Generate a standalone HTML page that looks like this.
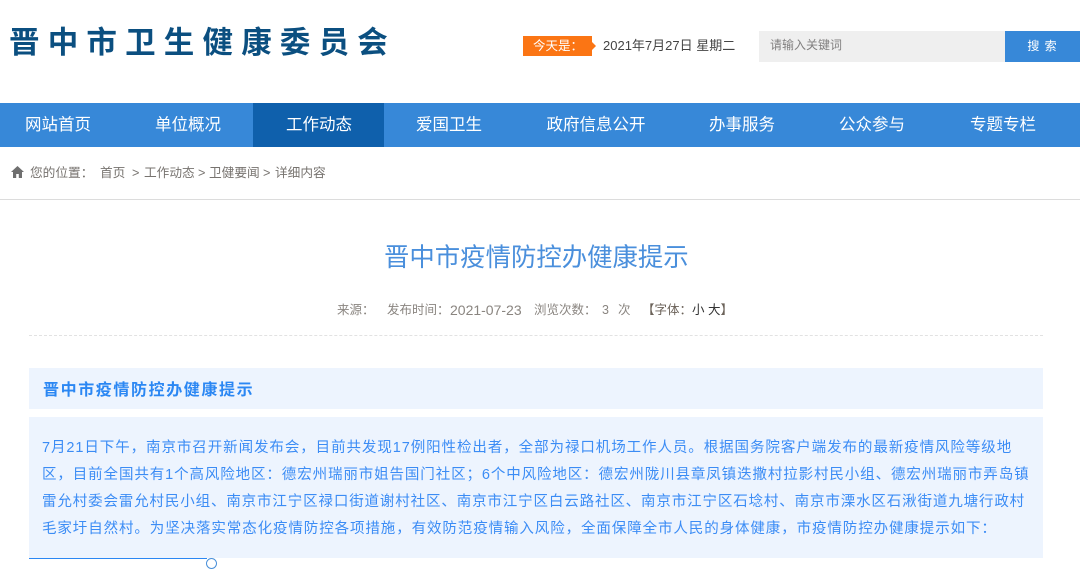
<!DOCTYPE html>
<html lang="zh-CN">
<head>
<meta charset="utf-8">
<title>晋中市疫情防控办健康提示</title>
<style>
html,body{margin:0;padding:0;background:#fff}
body{width:1080px;height:567px;overflow:hidden;position:relative;font-family:"Liberation Sans","Noto Sans CJK SC",sans-serif}
.a{position:absolute;white-space:nowrap}
.nav{left:0;top:103px;width:1080px;height:44px;background:#3788d8}
.n{position:absolute;top:103px;height:44px;line-height:44px;color:#fff;font-size:16.5px;text-align:center;width:140px}
.b{color:#3b8cf5;font-size:14.5px;height:27px;line-height:27px;left:42px}
.m{top:301px;font-size:12.5px;line-height:18px;color:#8a8580}
.c{top:163px;font-size:12.7px;line-height:20px;color:#77736f}
</style>
</head>
<body>
<div class="a" style="left:9px;top:23px;font-size:30.5px;line-height:40px;font-weight:700;color:#0b4f80;letter-spacing:8.2px">晋中市卫生健康委员会</div>

<div class="a" style="left:523px;top:36px;width:69px;height:20px;background:#fb7514;color:#fff;font-size:12.5px;line-height:20px;text-indent:10px">今天是：</div>
<div class="a" style="left:592px;top:42px;width:0;height:0;border-left:4px solid #fb7514;border-top:4px solid transparent;border-bottom:4px solid transparent"></div>
<div class="a" style="left:603px;top:36px;font-size:13px;line-height:20px;color:#444">2021年7月27日 星期二</div>

<div class="a" style="left:759px;top:31px;width:246px;height:31px;background:#efefef"></div>
<div class="a" style="left:770px;top:36px;font-size:12px;line-height:19px;color:#817f7f">请输入关键词</div>
<div class="a" style="left:1005px;top:31px;width:75px;height:31px;background:#3788d8;color:#fff;font-size:12px;line-height:31px;text-align:center;letter-spacing:1px">搜 索</div>

<div class="a nav"></div>
<div class="a" style="left:253px;top:103px;width:131px;height:44px;background:#0f60ac"></div>
<div class="n" style="left:-12px">网站首页</div>
<div class="n" style="left:118px">单位概况</div>
<div class="n" style="left:249px">工作动态</div>
<div class="n" style="left:379px">爱国卫生</div>
<div class="n" style="left:526px">政府信息公开</div>
<div class="n" style="left:672px">办事服务</div>
<div class="n" style="left:802px">公众参与</div>
<div class="n" style="left:933px">专题专栏</div>

<svg class="a" style="left:11px;top:166px" width="13" height="12" viewBox="0 0 13 12"><path d="M6.5 0 L0 6 H2 V12 H5.2 V8 H7.8 V12 H11 V6 H13 Z" fill="#6f6f6f"/></svg>
<div class="a c" style="left:30px">您的位置：</div>
<div class="a c" style="left:100px">首页</div>
<div class="a c" style="left:132px">&gt;</div>
<div class="a c" style="left:144px">工作动态</div>
<div class="a c" style="left:198px">&gt;</div>
<div class="a c" style="left:209px">卫健要闻</div>
<div class="a c" style="left:263px">&gt;</div>
<div class="a c" style="left:275px">详细内容</div>
<div class="a" style="left:0;top:199px;width:1080px;height:1px;background:#dcdcdc"></div>

<div class="a" style="left:384px;top:239px;font-size:25.4px;line-height:38px;color:#4a8fdc">晋中市疫情防控办健康提示</div>

<div class="a m" style="left:337px">来源：</div>
<div class="a m" style="left:387px">发布时间：</div>
<div class="a m" style="left:450px;font-size:14px">2021-07-23</div>
<div class="a m" style="left:534px">浏览次数：</div>
<div class="a m" style="left:602px">3</div>
<div class="a m" style="left:618px">次</div>
<div class="a m" style="left:642px;color:#6b6259">【字体：<span style="color:#333">小 大</span>】</div>
<div class="a" style="left:29px;top:335px;width:1014px;height:0;border-top:1px dashed #e2e2e2"></div>

<div class="a" style="left:29px;top:368px;width:1014px;height:41px;background:#edf4fe"></div>
<div class="a" style="left:43px;top:379px;font-size:16px;line-height:24px;font-weight:700;color:#2b87f3;letter-spacing:1.6px">晋中市疫情防控办健康提示</div>

<div class="a" style="left:29px;top:417px;width:1014px;height:141px;background:#edf4fe"></div>
<div class="a b" style="top:435px;letter-spacing:.92px">7月21日下午，南京市召开新闻发布会，目前共发现17例阳性检出者，全部为禄口机场工作人员。根据国务院客户端发布的最新疫情风险等级地</div>
<div class="a b" style="top:462px;letter-spacing:.89px">区，目前全国共有1个高风险地区：德宏州瑞丽市姐告国门社区；6个中风险地区：德宏州陇川县章凤镇迭撒村拉影村民小组、德宏州瑞丽市弄岛镇</div>
<div class="a b" style="top:489px;letter-spacing:.86px">雷允村委会雷允村民小组、南京市江宁区禄口街道谢村社区、南京市江宁区白云路社区、南京市江宁区石埝村、南京市溧水区石湫街道九塘行政村</div>
<div class="a b" style="top:516px;letter-spacing:.9px">毛家圩自然村。为坚决落实常态化疫情防控各项措施，有效防范疫情输入风险，全面保障全市人民的身体健康，市疫情防控办健康提示如下：</div>

<div class="a" style="left:29px;top:558px;width:178px;height:1px;background:#2b87f3"></div>
<div class="a" style="left:206px;top:558px;width:9px;height:9px;border:1px solid #4a90d9;border-radius:50%;background:#fff"></div>
</body>
</html>
